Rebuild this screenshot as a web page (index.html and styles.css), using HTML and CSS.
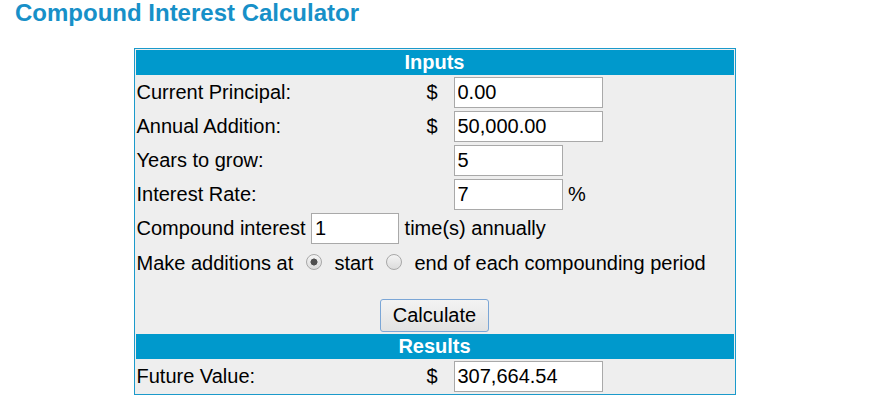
FILE: index.html
```html
<!DOCTYPE html>
<html>
<head>
<meta charset="utf-8">
<title>Compound Interest Calculator</title>
<link rel="stylesheet" href="styles.css">
</head>
<body>
<h1 class="title">Compound Interest Calculator</h1>
<table class="calc">
  <colgroup>
    <col class="c-label">
    <col class="c-cur">
    <col class="c-field">
  </colgroup>
  <tr><th colspan="3" class="band">Inputs</th></tr>
  <tr>
    <td>Current Principal:</td>
    <td class="cur">$</td>
    <td><input class="field wide" type="text" value="0.00"></td>
  </tr>
  <tr>
    <td>Annual Addition:</td>
    <td class="cur">$</td>
    <td><input class="field wide" type="text" value="50,000.00"></td>
  </tr>
  <tr>
    <td>Years to grow:</td>
    <td class="cur"></td>
    <td><input class="field mid" type="text" value="5"></td>
  </tr>
  <tr>
    <td>Interest Rate:</td>
    <td class="cur"></td>
    <td><input class="field mid" type="text" value="7"> %</td>
  </tr>
  <tr>
    <td colspan="3">Compound interest <input class="field small" type="text" value="1"> time(s) annually</td>
  </tr>
  <tr>
    <td colspan="3"><div class="radio-line">Make additions at <input class="radio" type="radio" name="when" checked> start <input class="radio" type="radio" name="when"> end of each compounding period</div></td>
  </tr>
  <tr>
    <td colspan="3" class="action"><button class="btn" type="button">Calculate</button></td>
  </tr>
  <tr><th colspan="3" class="band">Results</th></tr>
  <tr>
    <td>Future Value:</td>
    <td class="cur">$</td>
    <td><input class="field wide" type="text" value="307,664.54"></td>
  </tr>
</table>
</body>
</html>
```
FILE: styles.css
```css
html, body {
  margin: 0;
  padding: 0;
  background: #ffffff;
}

body {
  font-family: "Liberation Sans", Arial, sans-serif;
  color: #000;
}

.title {
  margin: 0;
  padding-left: 15px;
  font-size: 24px;
  line-height: 26px;
  font-weight: bold;
  color: #1790c8;
}

.calc {
  margin: 22px auto 0;
  width: 602px;
  table-layout: fixed;
  border: 1px solid #1b9acb;
  border-spacing: 1px;
  background: #eeeeee;
  font-size: 20px;
}

.c-label { width: 279px; }
.c-cur { width: 36px; }
.c-field { width: 281px; }

.calc td, .calc th {
  padding: 1px;
  vertical-align: middle;
  white-space: nowrap;
  text-align: left;
}

.calc th.band {
  background: #0099cc;
  color: #ffffff;
  text-align: center;
  font-weight: bold;
  line-height: 23px;
}

.calc td.cur {
  text-align: right;
  padding-right: 14px;
}

.field {
  box-sizing: border-box;
  height: 31px;
  margin: 0;
  padding: 0 3px;
  border: 1px solid #a9a9a9;
  background: #ffffff;
  font-family: "Liberation Sans", Arial, sans-serif;
  font-size: 20px;
  color: #000;
  vertical-align: baseline;
}

.field.wide { width: 149px; }
.field.mid { width: 109px; }
.field.small { width: 88px; }

.radio-line {
  height: 33px;
  line-height: 33px;
}

.radio {
  -webkit-appearance: none;
  appearance: none;
  box-sizing: border-box;
  display: inline-block;
  width: 16px;
  min-width: 16px;
  height: 16px;
  margin: 0 7px;
  border: 1px solid #a8a8a8;
  border-radius: 50%;
  background: linear-gradient(#f4f4f4, #dcdcdc);
  vertical-align: baseline;
}

.radio:checked {
  background: radial-gradient(circle, #505050 0, #505050 3.2px, rgba(0,0,0,0) 3.8px), linear-gradient(#f4f4f4, #dcdcdc);
}

.calc td.action {
  text-align: center;
  padding-top: 17px;
  padding-bottom: 1px;
}

.btn {
  box-sizing: border-box;
  width: 109px;
  height: 33px;
  margin: 0;
  padding: 0;
  border: 1px solid #7ba6d6;
  border-radius: 3px;
  background: linear-gradient(#f3f3f3, #e2e2e2);
  font-family: "Liberation Sans", Arial, sans-serif;
  font-size: 20px;
  color: #000;
  vertical-align: bottom;
}
```
